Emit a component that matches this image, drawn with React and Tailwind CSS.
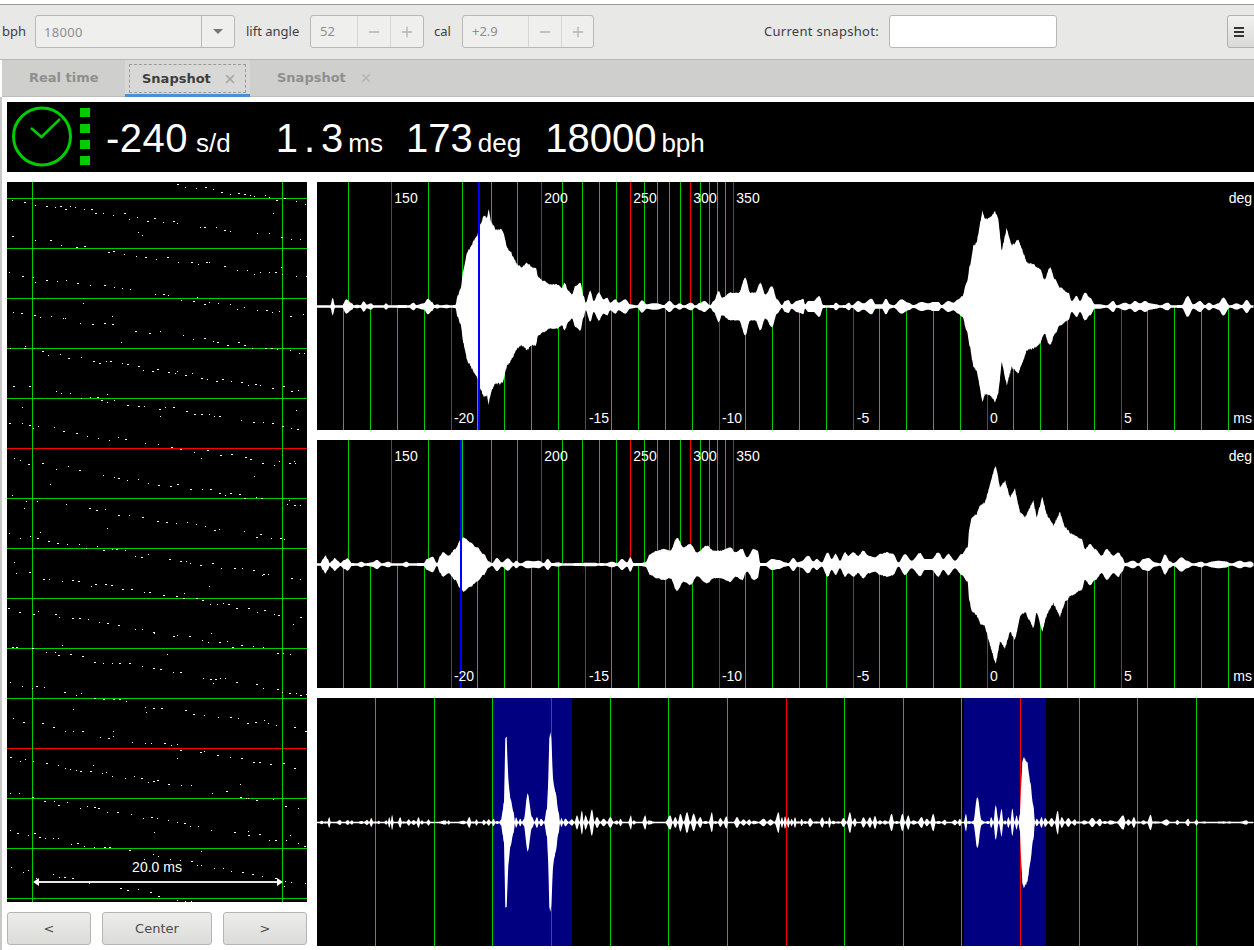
import React from "react";
import { X, Minus, Plus } from "lucide-react";

// grid lines and envelopes are measured in 3x zoom units, so they get divided by 3 when drawn
const UPPER_GREEN = [94, 334, 436, 523, 601, 736, 796, 847, 898, 982, 1021, 1057, 1090, 1150, 1177, 1201, 1225];
const UPPER_RED = [223, 673, 940, 1120, 1249];
const LOWER_GREEN = [79, 160, 241, 322, 481, 562, 643, 724, 883, 964, 1045, 1126, 1285, 1366, 1447, 1528, 1687, 1768, 1849, 1930, 2089, 2170, 2251, 2332, 2491, 2572, 2653, 2734];
const LOWER_RED = [403, 805, 1207, 1609, 2011, 2413];

const WAVE_1 =
  "0:2 40:2 47:25 54:2 75:2 88:20 105:8 110:2 120:4 130:2 140:14 150:4 162:8 170:2 200:2 207:8 215:2 265:3 275:2 290:10 298:3 320:8 333:22 345:12 352:3 362:5 370:2 390:4 400:2 415:3 422:30 430:50 440:110 450:160 460:175 470:195 480:210 490:245 500:270 510:265 515:292 522:255 535:230 550:230 558:225 570:175 580:165 590:145 600:125 615:115 630:130 645:115 655:115 665:85 680:75 700:65 720:65 735:55 742:70 755:45 765:35 775:60 790:70 800:30 806:10 820:45 830:15 845:40 860:20 870:25 880:10 895:20 905:10 925:20 940:5 960:2 975:17 990:5 1005:8 1020:8 1040:3 1057:15 1075:2 1088:8 1100:2 1123:10 1135:2 1150:10 1162:15 1180:3 1190:15 1205:45 1215:25 1240:40 1265:40 1285:85 1300:40 1315:40 1330:70 1345:35 1365:60 1380:20 1395:3 1404:15 1414:18 1424:5 1439:15 1449:18 1459:22 1464:5 1474:15 1489:15 1507:30 1519:3 1529:2 1549:3 1556:10 1569:2 1584:3 1596:10 1604:2 1624:15 1639:8 1664:22 1676:5 1694:5 1707:22 1719:5 1729:2 1754:20 1774:10 1789:3 1814:12 1834:8 1849:12 1864:12 1874:3 1894:15 1909:10 1924:20 1936:30 1949:70 1959:120 1969:180 1979:190 1996:285 2004:260 2019:265 2034:285 2044:260 2054:165 2069:235 2084:180 2104:200 2119:160 2129:130 2149:125 2169:110 2182:80 2199:115 2214:80 2229:55 2254:40 2264:15 2279:30 2289:15 2304:40 2319:25 2334:5 2349:5 2369:2 2389:15 2399:2 2424:10 2439:5 2454:15 2469:8 2484:15 2499:8 2519:5 2529:2 2552:10 2564:2 2594:3 2612:30 2629:5 2649:15 2664:3 2676:10 2689:3 2704:8 2719:25 2739:2 2759:8 2774:3 2789:18 2804:2 2811:2";

const WAVE_2 =
  "0:2 10:2 18:15 25:25 32:15 38:3 46:10 53:18 62:10 70:3 82:12 92:17 105:3 120:2 133:7 145:2 165:5 180:12 195:2 215:7 225:2 255:2 268:7 278:2 320:3 330:15 347:22 360:3 370:25 378:35 395:25 415:45 430:70 440:80 460:65 480:50 500:30 515:8 525:3 540:18 555:5 572:17 590:3 597:10 610:2 632:10 650:8 665:10 680:3 692:15 705:3 725:5 735:2 835:4 842:2 855:3 865:2 885:7 900:3 915:15 930:5 940:20 950:3 970:3 985:5 1000:30 1020:40 1040:45 1060:40 1080:78 1100:50 1120:60 1140:35 1170:55 1190:40 1210:40 1240:50 1255:35 1275:45 1290:20 1310:45 1322:40 1330:3 1345:3 1365:15 1385:12 1404:5 1414:3 1429:18 1442:5 1452:8 1474:25 1489:8 1499:15 1514:5 1532:35 1544:15 1556:30 1569:10 1584:35 1594:25 1609:35 1624:25 1639:40 1654:25 1674:20 1689:30 1709:35 1729:30 1744:5 1764:30 1784:10 1809:33 1824:15 1844:15 1864:35 1879:15 1894:30 1914:10 1934:30 1952:50 1956:100 1964:140 1979:150 1989:175 2004:185 2019:240 2036:298 2049:230 2064:250 2079:200 2094:225 2109:155 2124:140 2149:190 2159:140 2176:200 2189:150 2209:115 2229:155 2244:110 2264:90 2294:75 2304:45 2319:60 2334:45 2354:25 2369:45 2389:25 2404:35 2416:20 2424:3 2449:10 2464:2 2479:15 2494:18 2514:5 2529:2 2544:28 2559:8 2569:3 2594:20 2609:10 2629:2 2654:7 2664:2 2689:8 2704:10 2724:8 2744:2 2769:10 2784:5 2799:8 2811:3";

const WAVE_3 =
  "0:1 15:4 25:2 37:15 45:1 70:6 78:1 92:6 105:5 115:1 133:3 150:6 163:12 175:2 185:4 195:1 208:5 217:15 225:22 235:1 250:15 260:2 275:8 290:6 305:15 315:5 320:1 335:8 345:1 385:5 395:5 405:1 440:4 457:15 470:2 478:8 490:1 500:7 515:8 530:10 540:3 553:8 556:30 561:60 563:160 565:250 569:254 571:200 574:130 580:70 590:30 597:15 610:10 620:8 632:85 645:15 660:15 672:10 690:40 694:130 697:250 700:270 703:250 708:130 715:90 725:30 733:12 745:10 765:8 780:20 795:35 805:20 825:38 840:15 860:10 880:15 900:5 910:10 925:1 942:20 950:5 965:1 985:20 995:5 1030:1 1060:20 1075:15 1090:25 1110:30 1130:25 1150:15 1165:3 1185:28 1195:3 1210:12 1228:17 1240:1 1260:15 1280:8 1297:8 1310:4 1340:10 1360:8 1385:30 1395:15 1404:18 1414:15 1424:10 1434:15 1444:2 1454:10 1464:3 1479:12 1499:2 1516:14 1529:3 1537:15 1549:4 1564:2 1579:12 1599:30 1614:12 1624:1 1639:14 1659:14 1674:18 1689:5 1704:5 1724:25 1739:3 1756:25 1774:20 1789:5 1814:15 1829:10 1849:25 1864:3 1884:7 1894:1 1914:7 1929:10 1934:1 1947:25 1956:3 1969:3 1981:75 1994:5 2014:3 2022:15 2036:50 2054:40 2064:5 2074:15 2086:40 2099:20 2109:25 2112:100 2116:180 2120:195 2132:175 2139:120 2149:50 2159:10 2174:15 2184:12 2204:12 2222:35 2234:15 2254:12 2274:8 2284:2 2301:5 2326:12 2349:10 2364:3 2379:5 2419:20 2434:8 2451:15 2464:2 2479:5 2501:22 2514:2 2549:8 2569:1 2581:6 2594:1 2614:10 2624:1 2639:8 2649:1 2662:2 2674:1 2721:2 2737:2 2749:1 2789:5 2799:1 2811:1";

const parseWave = (text) =>
  text.split(" ").map((pair) => {
    const [x, h] = pair.split(":").map(Number);
    return [x / 3, h / 3];
  });

// walks the envelope in half pixel steps, rounds the lobes and roughens the big ones a bit
const wavePoints = (text, center, spiky = false) => {
  let seed = 4711;
  const rnd = () => {
    seed = (seed * 16807) % 2147483647;
    return seed / 2147483647;
  };
  let src = parseWave(text);
  if (spiky) {
    const withGaps = [];
    src.forEach(([x, h], i) => {
      withGaps.push([x, h]);
      const next = src[i + 1];
      if (next && h < 20 && next[1] < 20 && next[0] - x > 2) withGaps.push([(x + next[0]) / 2, 0.3]);
    });
    src = withGaps;
  }
  const top = [];
  const bottom = [];
  for (let i = 0; i < src.length - 1; i++) {
    const [x0, h0] = src[i];
    const [x1, h1] = src[i + 1];
    const steps = Math.max(1, Math.round((x1 - x0) * 2));
    const big = Math.max(h0, h1) > 40;
    for (let s = 0; s < steps; s++) {
      const t = s / steps;
      const e = big ? t : (1 - Math.cos(Math.PI * t)) / 2;
      const h = h0 + (h1 - h0) * e;
      const rough = h > 8 ? (rnd() - 0.5) * (h > 30 ? 2.2 : 1) : 0;
      const rough2 = h > 8 ? (rnd() - 0.5) * (h > 30 ? 2.2 : 1) : 0;
      const x = x0 + (x1 - x0) * t;
      top.push(`${x.toFixed(1)},${(center - Math.max(h + rough, 0.2)).toFixed(1)}`);
      bottom.unshift(`${x.toFixed(1)},${(center + 1 + Math.max(h + rough2, 0.2)).toFixed(1)}`);
    }
  }
  return [...top, ...bottom].join(" ");
};

function VLine({ x, y, h, color, w = 1 }) {
  return <rect x={Math.floor(x / 3)} y={y} width={w} height={h} fill={color} shapeRendering="crispEdges" />;
}

function Label({ x, y, anchor = "middle", children }) {
  return (
    <text x={x} y={y} textAnchor={anchor} fill="#fff" fontSize="14">
      {children}
    </text>
  );
}

function WavePanel({ wave, blueX }) {
  return (
    <div className="h-[248px] bg-black overflow-hidden">
      <svg width="937" height="248" className="block font-['Liberation_Sans',sans-serif]">
        {UPPER_GREEN.map((x) => <VLine key={x} x={x} y={0} h={124} color="#00cc00" />)}
        {UPPER_RED.map((x) => <VLine key={x} x={x} y={0} h={124} color="#ff0000" />)}
        {LOWER_GREEN.map((x) => <VLine key={x} x={x} y={124} h={124} color="#00cc00" />)}
        {LOWER_RED.map((x) => <VLine key={x} x={x} y={124} h={124} color="#ff0000" />)}
        <polygon points={wavePoints(wave, 124)} fill="#fff" />
        <VLine x={blueX} y={0} h={248} color="#0000ff" w={2} />
        <Label x={89} y={21}>150</Label>
        <Label x={239} y={21}>200</Label>
        <Label x={328} y={21}>250</Label>
        <Label x={388} y={21}>300</Label>
        <Label x={431} y={21}>350</Label>
        <Label x={935} y={21} anchor="end">deg</Label>
        <Label x={147} y={241}>-20</Label>
        <Label x={282} y={241}>-15</Label>
        <Label x={415} y={241}>-10</Label>
        <Label x={546} y={241}>-5</Label>
        <Label x={677} y={241}>0</Label>
        <Label x={811} y={241}>5</Label>
        <Label x={935} y={241} anchor="end">ms</Label>
      </svg>
    </div>
  );
}

function TickPanel() {
  const green = [175, 352, 526, 880, 1054, 1231, 1582, 1759, 1933, 2287, 2461, 2638];
  const red = [703, 1408, 2110];
  return (
    <div className="h-[248px] bg-black overflow-hidden">
      <svg width="937" height="248" className="block">
        <rect x="175" y="0" width="80" height="248" fill="#000080" />
        <rect x="647" y="0" width="82" height="248" fill="#000080" />
        {green.map((x) => <VLine key={x} x={x} y={0} h={248} color="#00cc00" />)}
        {red.map((x) => <VLine key={x} x={x} y={0} h={248} color="#ff0000" />)}
        <polygon points={wavePoints(WAVE_3, 124, true)} fill="#fff" />
      </svg>
    </div>
  );
}

// small repeatable generator so the paperstrip dots stay the same every render
function makeDots() {
  let seed = 12345;
  const rnd = () => {
    seed = (seed * 16807) % 2147483647;
    return seed / 2147483647;
  };
  const dots = [];
  for (let k = -1; k < 19; k++) {
    let x = rnd() * 6;
    while (x < 300) {
      const skew = (k - 8) * 0.002;
      const y = 203 + 37.2 * k + (0.155 + skew) * (x + 7 - 34) + (rnd() - 0.5) * 5 - 182;
      if (rnd() > 0.12 && y > 1 && y < 719) dots.push([Math.round(x), Math.round(y), rnd() > 0.5 ? 2 : 1]);
      x += 4 + rnd() * 10;
    }
    // the odd strays away from the main trace
    for (let i = 0; i < 3; i++) {
      const sx = rnd() * 296;
      const sy = 203 + 37.2 * k + 0.155 * sx - 182 + (rnd() - 0.5) * 34;
      if (sy > 1 && sy < 719) dots.push([Math.round(sx), Math.round(sy), 1]);
    }
  }
  return dots;
}

const DOTS = makeDots();

function PaperStrip() {
  const rows = Array.from({ length: 15 }, (_, i) => i);
  return (
    <div className="h-[720px] bg-black overflow-hidden">
      <svg width="300" height="720" className="block font-['Liberation_Sans',sans-serif]">
        {rows.map((i) => (
          <rect key={i} x="0" y={16 + i * 50} width="300" height="1" fill={i === 5 || i === 11 ? "#ff0000" : "#00cc00"} shapeRendering="crispEdges" />
        ))}
        <rect x="25" y="0" width="1" height="720" fill="#00cc00" shapeRendering="crispEdges" />
        <rect x="275" y="0" width="1" height="720" fill="#00cc00" shapeRendering="crispEdges" />
        {DOTS.map(([x, y, w], i) => (
          <rect key={i} x={x} y={y} width={w} height="1" fill="#fff" shapeRendering="crispEdges" />
        ))}
        <rect x="31" y="699" width="239" height="2" fill="#e8e8e8" />
        <polygon points="26,700 32,696 32,704" fill="#fff" />
        <polygon points="276,700 270,696 270,704" fill="#fff" />
        <text x="150" y="690" textAnchor="middle" fill="#fff" fontSize="14">20.0 ms</text>
      </svg>
    </div>
  );
}

function Spin({ value, width, dividerA, dividerB }) {
  return (
    <div className={`flex h-[33px] rounded-[3px] border border-[#b8b8b6] bg-[#efefee] ${width}`}>
      <div className={`flex items-center pl-[9px] text-[#8e8e8d] ${dividerA}`}>{value}</div>
      <div className="flex w-[33px] items-center justify-center border-l border-[#d6d6d4] text-[#b4b4b2]">
        <Minus size={16} strokeWidth={2} />
      </div>
      <div className={`flex items-center justify-center border-l border-[#d6d6d4] text-[#b4b4b2] ${dividerB}`}>
        <Plus size={16} strokeWidth={2} />
      </div>
    </div>
  );
}

function Toolbar() {
  return (
    <div className="h-[56px] border-b border-[#b8b8b5] border-t border-t-[#9b9b99] bg-[#e8e8e7] mt-1">
      <div className="flex items-start pt-[10px] text-[13px] text-[#3c3f40] font-['Noto_Sans',sans-serif] leading-[33px]">
        <span className="ml-[2px] w-[33px] shrink-0">bph</span>
        <div className="flex h-[33px] w-[200px] shrink-0 rounded-[3px] border border-[#b8b8b6] bg-[#efefee]">
          <div className="w-[166px] pl-[8px] text-[#8e8e8d] tracking-[0.3px] border-r border-[#b8b8b6]">18000</div>
          <div className="flex flex-1 items-center justify-center">
            <div className="h-0 w-0 border-x-[5px] border-t-[5px] border-x-transparent border-t-[#777]" />
          </div>
        </div>
        <span className="ml-[11px] w-[64px] shrink-0">lift angle</span>
        <Spin value="52" width="w-[114px] shrink-0" dividerA="w-[46px]" dividerB="w-[33px]" />
        <span className="ml-[10px] w-[28px] shrink-0">cal</span>
        <Spin value="+2.9" width="w-[132px] shrink-0" dividerA="w-[65px]" dividerB="w-[32px]" />
        <span className="ml-auto mr-[10px] tracking-[0.3px]">Current snapshot:</span>
        <div className="h-[33px] w-[168px] shrink-0 rounded-[3px] border border-[#b8b8b6] bg-white" />
        <div className="ml-[170px] -mr-[3px] flex h-[33px] w-[30px] shrink-0 flex-col items-center justify-center gap-[2px] rounded-[3px] border border-[#b0b0ae] bg-linear-to-b from-[#f2f2f1] to-[#dadad8] pr-[6px]">
          <span className="h-[2px] w-[10px] bg-[#333]" />
          <span className="h-[2px] w-[10px] bg-[#333]" />
          <span className="h-[2px] w-[10px] bg-[#333]" />
        </div>
      </div>
    </div>
  );
}

function Tabs() {
  return (
    <div className="flex h-[37px] border-b border-[#bcbcba] bg-[#cfcfcd] ml-[2px] text-[13px] font-bold font-['DejaVu_Sans',sans-serif] text-[#8f8f8d]">
      <div className="flex w-[123px] items-center pl-[27px]">Real time</div>
      <div className="h-[37px] w-[125px] border-b-[3px] border-[#4a90d9] bg-[#d8d8d6] px-[4px] pt-[4px] pb-[1px]">
        <div className="flex h-[29px] items-center border border-dashed border-[#9a9a98] pl-[12px] text-[#3c3f40]">
          <span>Snapshot</span>
          <X size={14} strokeWidth={2.5} className="ml-[12px] text-[#a3a3a1]" />
        </div>
      </div>
      <div className="flex items-center pl-[27px]">
        <span>Snapshot</span>
        <X size={14} strokeWidth={2.5} className="ml-[13px] text-[#b4b4b2]" />
      </div>
    </div>
  );
}

function Reading({ value, unit, className, valueClass = "", unitClass = "ml-[7px]" }) {
  return (
    <div className={`flex items-baseline ${className}`}>
      <span className={`text-[40px] ${valueClass}`}>{value}</span>
      <span className={`text-[26px] ${unitClass}`}>{unit}</span>
    </div>
  );
}

function StatusBar() {
  return (
    <div className="flex h-[70px] items-center bg-black pt-[2px] text-white font-['Liberation_Sans',sans-serif] leading-none">
      <svg width="90" height="70" className="-mt-[2px] block shrink-0">
        <circle cx="35" cy="34.5" r="28.5" fill="none" stroke="#00cc00" strokeWidth="3" />
        <path d="M24 26 L34.5 35 L53 17" fill="none" stroke="#00cc00" strokeWidth="2.5" />
        <rect x="73" y="6" width="10" height="9" fill="#00cc00" />
        <rect x="73" y="22" width="10" height="9" fill="#00cc00" />
        <rect x="73" y="38" width="10" height="9" fill="#00cc00" />
        <rect x="73" y="54" width="10" height="9" fill="#00cc00" />
      </svg>
      <Reading value="-240" unit="s/d" className="ml-[9px]" valueClass="tracking-[0.5px]" unitClass="ml-[8px]" />
      <Reading value="1.3" unit="ms" className="ml-[45px]" valueClass="tracking-[6px]" unitClass="ml-[-1px]" />
      <Reading value="173" unit="deg" className="ml-[23px]" unitClass="ml-[5px]" />
      <Reading value="18000" unit="bph" className="ml-[24px]" unitClass="ml-[5px]" />
    </div>
  );
}

function NavButton({ width, children }) {
  return (
    <button className={`h-[33px] rounded-[3px] border border-[#b5b5b3] bg-linear-to-b from-[#ececeb] to-[#dcdcda] text-[13px] text-[#4a4d4e] font-['DejaVu_Sans',sans-serif] ${width}`}>
      {children}
    </button>
  );
}

export default function App() {
  return (
    <div className="h-[950px] w-[1254px] overflow-hidden bg-white">
      <Toolbar />
      <Tabs />
      <div className="h-[853px] border-l-2 border-[#c8c8c6] pl-[5px] pt-[5px]">
        <StatusBar />
        <div className="mt-[10px] flex gap-[10px]">
          <div className="w-[300px] shrink-0">
            <PaperStrip />
            <div className="mt-[10px] flex gap-[11px]">
              <NavButton width="w-[84px]">&lt;</NavButton>
              <NavButton width="w-[110px]">Center</NavButton>
              <NavButton width="w-[84px]">&gt;</NavButton>
            </div>
          </div>
          <div className="flex w-[937px] flex-col gap-[10px]">
            <WavePanel wave={WAVE_1} blueX={484} />
            <WavePanel wave={WAVE_2} blueX={430} />
            <TickPanel />
          </div>
        </div>
      </div>
    </div>
  );
}
